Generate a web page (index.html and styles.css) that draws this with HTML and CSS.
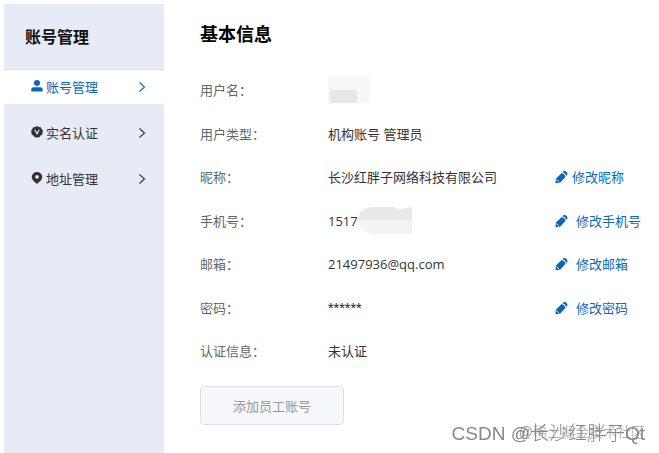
FILE: index.html
```html
<!DOCTYPE html>
<html lang="zh-CN">
<head>
<meta charset="utf-8">
<title>账号管理</title>
<link rel="stylesheet" href="styles.css">
</head>
<body>
<svg class="defs" aria-hidden="true">
  <symbol id="chevron" viewBox="0 0 8 12"><path d="M1.5 1.5 6.5 6 1.5 10.5" fill="none" stroke="currentColor" stroke-width="1.1"/></symbol>
  <symbol id="pen" viewBox="0 0 14 14"><g fill="currentColor"><path d="M8 1.9 9.3.8Q10.4 0 11.5.8L13.1 2.4Q14 3.4 13.1 4.5L12.1 5.8Q11.4 2.8 8 1.9Z"/><path d="M7.2 2.6Q10.4 3.5 11.4 6.7L6 12.6Q5.5 13 4.9 13.1L1.2 13.6Q.4 13.6.5 12.8L.9 9.4Q1 8.8 1.4 8.4Z"/></g><path d="M1.3 10Q3.4 10.6 4.1 12.8" fill="none" stroke="#fff" stroke-width=".8"/></symbol>
</svg>
<div class="page">
  <nav class="sidebar">
    <h2 class="sidebar-title">账号管理</h2>
    <div class="menu">
      <a class="item active" href="#account">
        <svg class="icon" viewBox="0 0 12 12"><circle cx="6" cy="3.1" r="3" fill="currentColor"/><path d="M.3 11.5V9.6Q.3 7.2 3 7.2H9Q11.7 7.2 11.7 9.6V11.5Z" fill="currentColor"/></svg>
        <span>账号管理</span>
        <svg class="chevron"><use href="#chevron"/></svg>
      </a>
      <a class="item" href="#verify">
        <svg class="icon" viewBox="0 0 12 12"><path d="M6 0 7.7 1 9.8 1.2 10.7 3.1 12 4.7 11.5 6.5 11.4 8.5 9.6 9.5 8.3 11.3 6 11.6 3.7 11.3 2.4 9.5.6 8.5.5 6.5 0 4.7 1.3 3.1 2.2 1.2 4.3 1Z" fill="currentColor"/><path d="M3.8 3.8 6 7.8 8.2 3.8" fill="none" stroke="#e7ebf6" stroke-width="1.1"/></svg>
        <span>实名认证</span>
        <svg class="chevron"><use href="#chevron"/></svg>
      </a>
      <a class="item" href="#address">
        <svg class="icon" viewBox="0 0 12 12"><path fill-rule="evenodd" d="M6 0A5.3 5.3 0 0 1 11.3 5.1C11.3 8 8 10.4 6 12 4 10.4 .7 8 .7 5.1A5.3 5.3 0 0 1 6 0ZM6 3.1A1.8 1.8 0 1 0 6 6.7 1.8 1.8 0 0 0 6 3.1Z" fill="currentColor"/></svg>
        <span>地址管理</span>
        <svg class="chevron"><use href="#chevron"/></svg>
      </a>
    </div>
  </nav>
  <main class="content">
    <h1 class="title">基本信息</h1>
    <dl class="info">
      <div class="row"><dt>用户名：</dt><dd><span class="mask-name"></span></dd></div>
      <div class="row"><dt>用户类型：</dt><dd>机构账号 管理员</dd></div>
      <div class="row"><dt>昵称：</dt><dd>长沙红胖子网络科技有限公司</dd><dd><a class="edit tight" href="#nick"><svg class="pen"><use href="#pen"/></svg>修改昵称</a></dd></div>
      <div class="row"><dt>手机号：</dt><dd>1517<svg class="mask-phone" viewBox="0 0 54 27"><path d="M0 13Q1 1 14 0H36Q40 4 44 2L54 0V13Z" fill="#e9e9e9"/><path d="M0 13H54V27H14Q2 25 0 13Z" fill="#f3f3f3"/></svg></dd><dd><a class="edit" href="#phone"><svg class="pen"><use href="#pen"/></svg>修改手机号</a></dd></div>
      <div class="row"><dt>邮箱：</dt><dd>21497936@qq.com</dd><dd><a class="edit" href="#mail"><svg class="pen"><use href="#pen"/></svg>修改邮箱</a></dd></div>
      <div class="row"><dt>密码：</dt><dd class="secret">******</dd><dd><a class="edit" href="#password"><svg class="pen"><use href="#pen"/></svg>修改密码</a></dd></div>
      <div class="row"><dt>认证信息：</dt><dd>未认证</dd></div>
    </dl>
    <button class="add" type="button" disabled>添加员工账号</button>
  </main>
</div>
<div class="watermark community">@稀土掘金技术社区</div>
<div class="watermark author">CSDN @长沙红胖子Qt</div>
</body>
</html>
```
FILE: styles.css
```css
* { box-sizing: border-box; }
body {
  margin: 0;
  background: #fff;
  color: #333;
  font: 13px/20px "Open Sans", "Noto Sans CJK SC", sans-serif;
}
a { text-decoration: none; color: inherit; }
.defs { position: absolute; width: 0; height: 0; }
.page { display: flex; min-height: 100vh; padding: 4px 0 0 4px; }

.sidebar { flex: 0 0 160px; background: #e7ebf6; }
.sidebar-title {
  margin: 0;
  padding: 21px 21px 20px;
  border-bottom: 1px solid #dde2ec;
  color: #111;
  font-size: 16px;
  line-height: 24px;
  font-weight: 600;
}
.menu { display: grid; gap: 12px; }
.item { display: flex; align-items: center; height: 34px; padding: 0 18px 0 27px; }
.item.active { background: #fff; color: #0b67b5; }
.icon { width: 12px; height: 12px; margin: 0 3px 2px 0; }
.chevron { width: 8px; height: 12px; margin-left: auto; }

.content { flex: 1; min-width: 0; padding: 16px 16px 28px 36px; }
.title { margin: 0; color: #000; font-size: 18px; line-height: 28px; font-weight: 600; }
.info { display: grid; grid-auto-rows: 44px 43px; margin: 20px 0 13px; }
.row { display: grid; grid-template-columns: 128px 227px 1fr; align-items: center; }
dt { color: #666; }
dd { display: flex; align-items: center; margin: 0; white-space: nowrap; }
.secret { font-family: Roboto, sans-serif; }
.mask-name {
  width: 42px;
  height: 26px;
  background: linear-gradient(#e6e7e8, #e6e7e8) 2px 13px / 27px 13px no-repeat, #f7f7f7;
}
.mask-phone { width: 54px; height: 27px; }
.edit { display: flex; align-items: center; gap: 8px; color: #0b67b5; }
.edit.tight { gap: 4px; }
.pen { width: 13px; height: 14px; }
.add {
  height: 39px;
  padding: 0 32px;
  border: 1px solid #dcdfe6;
  border-radius: 4px;
  background: #f5f7fb;
  color: #999;
  font: inherit;
}

.watermark { position: fixed; right: 14px; white-space: nowrap; }
.author {
  bottom: 5px;
  color: #888;
  font: 300 19px/28px "Liberation Sans", "Noto Sans CJK SC", sans-serif;
}
.community {
  bottom: 9px;
  color: #999;
  font: 300 14px/24px "Liberation Sans", "Noto Sans CJK SC", sans-serif;
}
```
